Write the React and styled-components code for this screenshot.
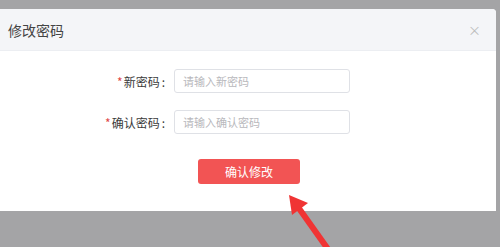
import React from "react";
import styled, { createGlobalStyle } from "styled-components";

const GlobalStyle = createGlobalStyle`
  html, body {
    margin: 0;
    padding: 0;
    background: #a4a4a6;
    font-family: "Noto Sans CJK SC", "Noto Sans", sans-serif;
  }
`;

const Page = styled.div`
  position: relative;
  width: 500px;
  height: 247px;
  padding-top: 9px;
  box-sizing: border-box;
  overflow: hidden;
`;

const Modal = styled.div`
  width: 496px;
  background: #fff;
  border-top-right-radius: 4px;
  overflow: hidden;
`;

const Header = styled.div`
  height: 42px;
  display: flex;
  align-items: center;
  justify-content: space-between;
  padding: 0 15px 0 8px;
  background: #f4f5f8;
  border-bottom: 1px solid #eceef2;
  box-sizing: border-box;
`;

const Title = styled.div`
  font-size: 14px;
  color: #444;
`;

const Close = styled.span`
  font-size: 13px;
  color: #bcbcbc;
  line-height: 1;
`;

const Body = styled.div`
  height: 160px;
  box-sizing: border-box;
  padding-top: 18px;
  display: flex;
  flex-direction: column;
  align-items: flex-start;
`;

const Row = styled.div`
  display: grid;
  grid-template-columns: 165px 176px;
  column-gap: 9px;
  align-items: center;
  margin-bottom: ${(p) => p.$mb || 0}px;
`;

const Label = styled.label`
  text-align: right;
  font-size: 12px;
  color: #3a3a3a;
`;

const Star = styled.span`
  color: #e04848;
  margin-right: 1px;
`;

const Colon = styled.span`
  margin-left: 2px;
`;

const Input = styled.input`
  height: 24px;
  box-sizing: border-box;
  border: 1px solid #dfe1e6;
  border-radius: 3px;
  padding: 0 8px;
  font-size: 11px;
  font-family: inherit;
  outline: none;
  &::placeholder {
    color: #b8b8bc;
  }
`;

const Button = styled.button`
  margin: 25px 0 0 198px;
  width: 102px;
  height: 25px;
  border: none;
  border-radius: 3px;
  background: #f25454;
  color: #fff;
  font-size: 12px;
  font-family: inherit;
`;

const Arrow = styled.svg`
  position: absolute;
  left: 280px;
  top: 190px;
`;

export default function App() {
  return (
    <Page>
      <GlobalStyle />
      <Modal>
        <Header>
          <Title>修改密码</Title>
          <Close>×</Close>
        </Header>
        <Body>
          <Row $mb={17}>
            <Label>
              <Star>*</Star>新密码<Colon>:</Colon>
            </Label>
            <Input placeholder="请输入新密码" />
          </Row>
          <Row>
            <Label>
              <Star>*</Star>确认密码<Colon>:</Colon>
            </Label>
            <Input placeholder="请输入确认密码" />
          </Row>
          <Button>确认修改</Button>
        </Body>
      </Modal>
      <Arrow width="70" height="60" viewBox="0 0 70 60">
        <line x1="18" y1="17" x2="50" y2="62" stroke="#f03434" strokeWidth="6" />
        <polygon points="9,5 28,13 12,25" fill="#f03434" />
      </Arrow>
    </Page>
  );
}
